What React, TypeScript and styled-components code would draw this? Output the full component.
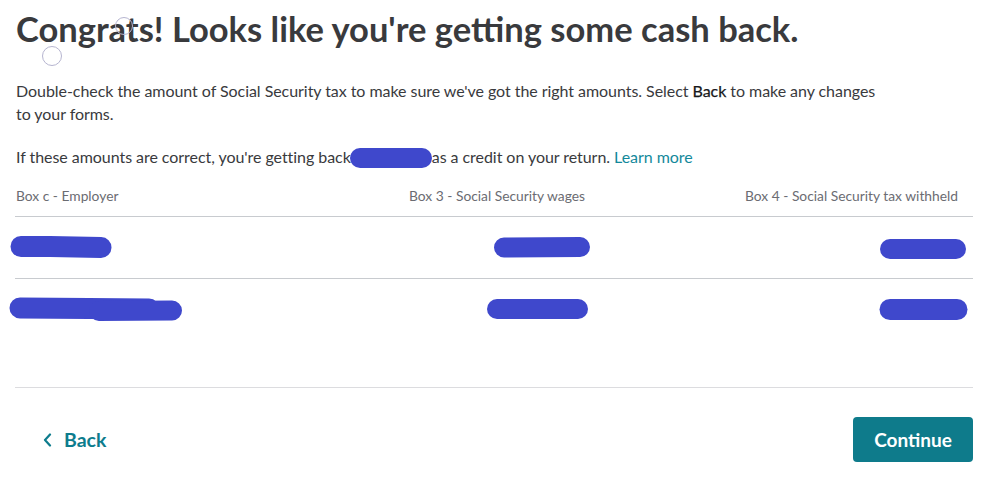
import React from "react";
import styled, { createGlobalStyle } from "styled-components";

const INK = "#393a3d";
const MUTED = "#6b6c72";
const TEAL = "#0d7c8d";
const INDIGO = "#3f48cc";

const GlobalStyle = createGlobalStyle`
  body {
    margin: 0;
    background: #ffffff;
    font-family: "Lato", "Noto Sans", sans-serif;
    color: ${INK};
  }
`;

type Stroke = { d: string; w: number };

// hand drawn redaction marks over the amounts
const Scribble = ({ width, height, strokes }: { width: number; height: number; strokes: Stroke[] }) => (
  <svg width={width} height={height} viewBox={`0 0 ${width} ${height}`} style={{ display: "block" }}>
    {strokes.map((s, i) => (
      <path key={i} d={s.d} stroke={INDIGO} strokeWidth={s.w} strokeLinecap="round" strokeLinejoin="round" fill="none" />
    ))}
  </svg>
);

type Mark = { w: number; h: number; shift: number; strokes: Stroke[] };

const rows: { employer: Mark; wages: Mark; tax: Mark }[] = [
  {
    employer: { w: 104, h: 25, shift: -6, strokes: [{ d: "M11,11.5 L40,11.5 L91,12.5", w: 21 }] },
    wages: { w: 98, h: 22, shift: 6, strokes: [{ d: "M11,10.5 L87,10", w: 20 }] },
    tax: { w: 88, h: 24, shift: 9, strokes: [{ d: "M11,13 L77,13", w: 20 }] },
  },
  {
    employer: {
      w: 176,
      h: 27,
      shift: -7,
      strokes: [
        { d: "M11,12 L80,12.5 L140,13", w: 21 },
        { d: "M90,15 L163,14.5", w: 20 },
      ],
    },
    wages: { w: 103, h: 22, shift: 4, strokes: [{ d: "M11,10 L92,10", w: 20 }] },
    tax: { w: 89, h: 22, shift: 10, strokes: [{ d: "M11,10.5 L78,10.5", w: 21 }] },
  },
];

const App = () => (
  <>
    <GlobalStyle />
    <Page>
      <Title>Congrats! Looks like you're getting some cash back.</Title>
      <Para>
        Double-check the amount of Social Security tax to make sure we've got the right amounts. Select{" "}
        <Strong>Back</Strong> to make any changes to your forms.
      </Para>
      <Para $gap={20}>
        If these amounts are correct, you're getting back
        <InlineRedact />
        as a credit on your return. <Link href="#">Learn more</Link>
      </Para>

      <Table>
        <HeadRow>
          <HeadCell>Box c - Employer</HeadCell>
          <HeadCell $right>Box 3 - Social Security wages</HeadCell>
          <HeadCell $right>Box 4 - Social Security tax withheld</HeadCell>
        </HeadRow>
        {rows.map((r, i) => (
          <Row key={i} $last={i === rows.length - 1}>
            {[r.employer, r.wages, r.tax].map((m, j) => (
              <Cell key={j} $right={j > 0} $shift={m.shift}>
                <Scribble width={m.w} height={m.h} strokes={m.strokes} />
              </Cell>
            ))}
          </Row>
        ))}
      </Table>

      <Footer>
        <BackButton type="button">
          <svg width="9" height="14" viewBox="0 0 9 14">
            <path d="M7 1.5 L2 7 L7 12.5" stroke={TEAL} strokeWidth="2.2" fill="none" strokeLinecap="round" strokeLinejoin="round" />
          </svg>
          Back
        </BackButton>
        <ContinueButton type="button">Continue</ContinueButton>
      </Footer>

      <Ring $x={124} $y={26} $r={9} />
      <Ring $x={52} $y={56} $r={10} />
    </Page>
  </>
);

const Page = styled.main`
  position: relative;
  padding: 9px 26px 0 15px;
  min-height: 484px;
  box-sizing: border-box;
`;

const Title = styled.h1`
  margin: 0 0 0 1px;
  font-size: 34.5px;
  line-height: 40px;
  font-weight: 700;
  color: ${INK};
`;

const Para = styled.p<{ $gap?: number }>`
  margin: ${({ $gap }) => $gap ?? 30}px 0 0 1px;
  max-width: 868px;
  font-size: 16px;
  line-height: 23px;
  letter-spacing: -0.05px;
  color: ${INK};
`;

const Strong = styled.span`
  font-weight: 400;
  color: #17181b;
  -webkit-text-stroke: 0.25px #17181b;
`;

const InlineRedact = styled.span`
  display: inline-block;
  width: 82px;
  height: 20px;
  margin: 0 0 0 -1px;
  vertical-align: -5px;
  border-radius: 10px;
  background: ${INDIGO};
`;

const Link = styled.a`
  color: #13899b;
  text-decoration: none;
`;

const Table = styled.div`
  margin-top: 18px;
`;

const grid = `
  display: grid;
  grid-template-columns: 1fr 180px 373px;
  padding: 0 15px 0 1px;
`;

const HeadRow = styled.div`
  ${grid};
  padding-bottom: 10px;
  border-bottom: 1px solid #c8cbcf;
`;

const HeadCell = styled.div<{ $right?: boolean }>`
  font-size: 13.8px;
  line-height: 20px;
  color: ${MUTED};
  text-align: ${({ $right }) => ($right ? "right" : "left")};
`;

const Row = styled.div<{ $last?: boolean }>`
  ${grid};
  height: 61px;
  align-items: center;
  border-bottom: ${({ $last }) => ($last ? "none" : "1px solid #c8cbcf")};
`;

const Cell = styled.div<{ $right?: boolean; $shift?: number }>`
  display: flex;
  justify-content: ${({ $right }) => ($right ? "flex-end" : "flex-start")};
  margin-right: ${({ $right, $shift }) => ($right ? -($shift ?? 0) : 0)}px;
  margin-left: ${({ $right, $shift }) => ($right ? 0 : $shift ?? 0)}px;
`;

const Footer = styled.footer`
  margin-top: 47px;
  border-top: 1px solid #dcdcdf;
  padding-top: 29px;
  display: flex;
  align-items: center;
  justify-content: space-between;
`;

const BackButton = styled.button`
  display: flex;
  align-items: center;
  gap: 12px;
  margin-left: 28px;
  padding: 0;
  border: none;
  background: none;
  font-family: inherit;
  font-size: 19.5px;
  font-weight: 700;
  color: ${TEAL};
  cursor: pointer;
`;

const ContinueButton = styled.button`
  width: 120px;
  height: 45px;
  border: none;
  border-radius: 4px;
  background: #0e7b8b;
  color: #ffffff;
  font-family: inherit;
  font-size: 19px;
  font-weight: 700;
  cursor: pointer;
`;

const Ring = styled.span<{ $x: number; $y: number; $r: number }>`
  position: absolute;
  left: ${({ $x, $r }) => $x - $r}px;
  top: ${({ $y, $r }) => $y - $r}px;
  width: ${({ $r }) => $r * 2 - 2}px;
  height: ${({ $r }) => $r * 2 - 2}px;
  border: 1.5px solid #b6b5d0;
  border-radius: 50%;
  pointer-events: none;
`;

export default App;
